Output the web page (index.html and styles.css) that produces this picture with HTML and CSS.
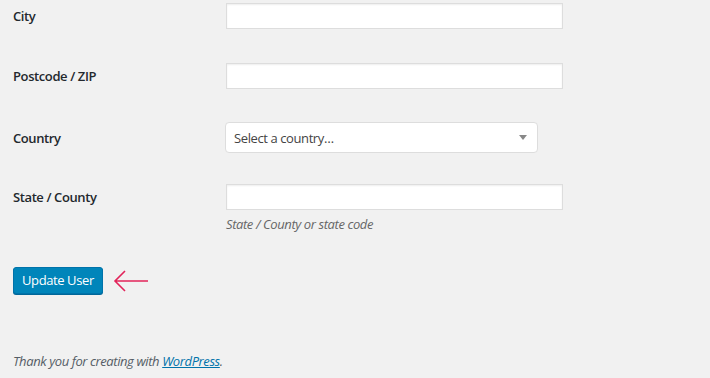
FILE: index.html
```html
<html>
<head>
<title>Edit User</title>
<link rel="stylesheet" href="styles.css">
</head>
<body>

    <div class="wrap">
        <div class="form-row">
            <label class="label" for="city">City</label>
            <div class="field">
                <input id="city" class="text" type="text" />
            </div>
        </div>
        <div class="form-row">
            <label class="label" for="postcode">Postcode / ZIP</label>
            <div class="field">
                <input id="postcode" class="text" type="text" />
            </div>
        </div>
        <div class="form-row short-gap">
            <label class="label tall" for="country">Country</label>
            <div class="field">
                <span id="country" class="select-box">
                    <span class="select-text">Select a country&hellip;</span>
                    <span class="select-arrow"></span>
                </span>
            </div>
        </div>
        <div class="form-row last">
            <label class="label" for="state">State / County</label>
            <div class="field">
                <input id="state" class="text" type="text" />
                <p class="description">State / County or state code</p>
            </div>
        </div>

        <div class="submit">
            <button class="button-primary" type="button">Update User</button>
            <svg class="arrow" width="36" height="24" viewBox="0 0 36 24">
                <path d="M35 12 H2 M12 2 L2 12 L12 22" fill="none" stroke="#e2245a" stroke-width="1.6" />
            </svg>
        </div>
    </div>

    <div class="footer">
        Thank you for creating with <a href="#">WordPress</a>.
    </div>

</body>
</html>
```

FILE: styles.css
```css
body {
    margin: 0;
    background: #f1f1f1;
    color: #23282d;
    font-family: "Open Sans", sans-serif;
    font-size: 13px;
    letter-spacing: -0.4px;
}

.wrap {
    padding: 3px 0 0 13px;
}

/* One label + field line of the table */
.form-row {
    display: flex;
    align-items: flex-start;
    margin-bottom: 34px;
}

.form-row.short-gap {
    margin-bottom: 30px;
}

.form-row.last {
    margin-bottom: 0;
}

.label {
    width: 213px;
    font-weight: 600;
    line-height: 26px;
}

.label.tall {
    line-height: 31px;
}

.text {
    display: block;
    box-sizing: border-box;
    width: 337px;
    height: 26px;
    margin: 0;
    border: 1px solid #ddd;
    background: #fff;
    box-shadow: inset 0 1px 2px rgba(0, 0, 0, .07);
    font: inherit;
}

.select-box {
    display: flex;
    align-items: center;
    justify-content: space-between;
    box-sizing: border-box;
    width: 313px;
    height: 31px;
    margin: -1px 0 0 -1px;
    padding: 0 10px 0 8px;
    border: 1px solid #ddd;
    border-radius: 4px;
    background: #fff;
    color: #444;
}

.select-arrow {
    width: 0;
    height: 0;
    border-left: 4px solid transparent;
    border-right: 4px solid transparent;
    border-top: 5px solid #888;
}

.description {
    margin: 5px 0 0;
    color: #666;
    font-style: italic;
}

.submit {
    display: flex;
    align-items: center;
    margin-top: 34px;
}

.button-primary {
    height: 27px;
    padding: 0 8px 1px;
    border: 1px solid #0073aa;
    border-radius: 3px;
    background: #0085ba;
    box-shadow: 0 1px 0 #006799;
    color: #fff;
    font: inherit;
    letter-spacing: inherit;
}

.arrow {
    margin-left: 10px;
}

.footer {
    padding: 58px 13px 0;
    color: #555d66;
    font-style: italic;
}

.footer a {
    color: #0073aa;
}
```
